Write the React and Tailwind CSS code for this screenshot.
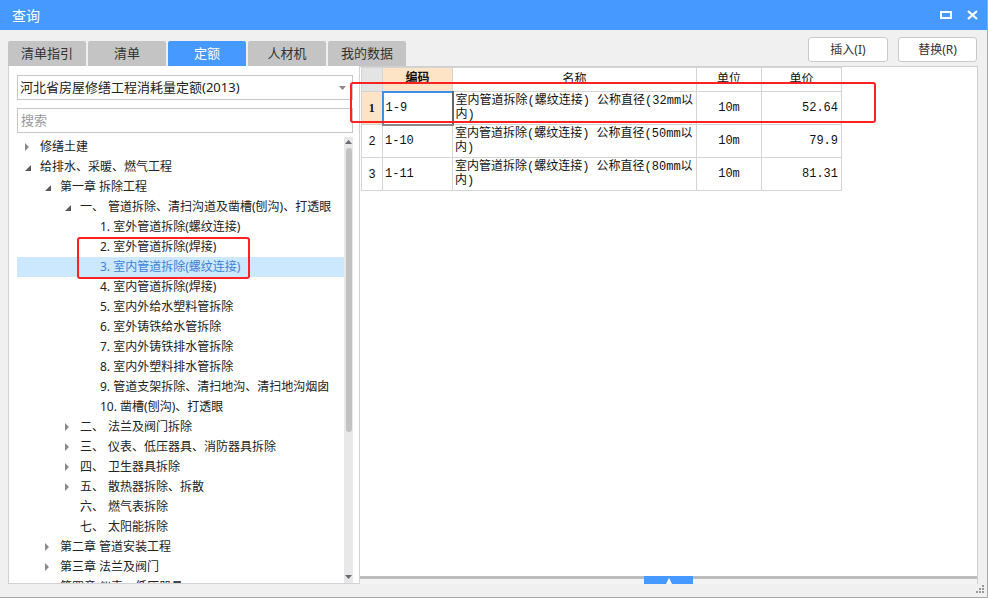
import React from "react";

const TREE = [
  { lv: 0, arrow: "closed", text: "修缮土建" },
  { lv: 0, arrow: "open", text: "给排水、采暖、燃气工程" },
  { lv: 1, arrow: "open", text: "第一章 拆除工程" },
  { lv: 2, arrow: "open", num: "一、", text: "管道拆除、清扫沟道及凿槽(刨沟)、打透眼" },
  { lv: 3, text: "1. 室外管道拆除(螺纹连接)" },
  { lv: 3, text: "2. 室外管道拆除(焊接)" },
  { lv: 3, text: "3. 室内管道拆除(螺纹连接)", selected: true },
  { lv: 3, text: "4. 室内管道拆除(焊接)" },
  { lv: 3, text: "5. 室内外给水塑料管拆除" },
  { lv: 3, text: "6. 室外铸铁给水管拆除" },
  { lv: 3, text: "7. 室内外铸铁排水管拆除" },
  { lv: 3, text: "8. 室内外塑料排水管拆除" },
  { lv: 3, text: "9. 管道支架拆除、清扫地沟、清扫地沟烟囱" },
  { lv: 3, text: "10. 凿槽(刨沟)、打透眼" },
  { lv: 2, arrow: "closed", num: "二、", text: "法兰及阀门拆除" },
  { lv: 2, arrow: "closed", num: "三、", text: "仪表、低压器具、消防器具拆除" },
  { lv: 2, arrow: "closed", num: "四、", text: "卫生器具拆除" },
  { lv: 2, arrow: "closed", num: "五、", text: "散热器拆除、拆散" },
  { lv: 2, num: "六、", text: "燃气表拆除" },
  { lv: 2, num: "七、", text: "太阳能拆除" },
  { lv: 1, arrow: "closed", text: "第二章 管道安装工程" },
  { lv: 1, arrow: "closed", text: "第三章 法兰及阀门" },
  { lv: 1, arrow: "closed", text: "第四章 仪表、低压器具" },
];

const INDENT = ["pl-[8px]", "pl-[28px]", "pl-[48px]", "pl-[68px]"];

const TABS = ["清单指引", "清单", "定额", "人材机", "我的数据"];

const ROWS = [
  { n: "1", code: "1-9", size: "32", unit: "10m", price: "52.64", active: true },
  { n: "2", code: "1-10", size: "50", unit: "10m", price: "79.9" },
  { n: "3", code: "1-11", size: "80", unit: "10m", price: "81.31" },
];

function Arrow({ kind }) {
  if (kind === "open") {
    return (
      <svg width="7" height="7" viewBox="0 0 7 7" className="mt-[3px]">
        <polygon points="6,0 6,6 0,6" fill="#5a5a5a" />
      </svg>
    );
  }
  if (kind === "closed") {
    return (
      <svg width="5" height="8" viewBox="0 0 5 8">
        <polygon points="0,0 4,4 0,8" fill="#8a8a8a" />
      </svg>
    );
  }
  return null;
}

function TreeRow({ item }) {
  return (
    <div
      className={`h-[20px] flex items-center whitespace-nowrap ${INDENT[item.lv]} ${
        item.selected ? "bg-[#cce8ff] text-[#3c82d8]" : "text-[#222]"
      }`}
    >
      <span className="w-[15px] shrink-0 flex items-center">
        <Arrow kind={item.arrow} />
      </span>
      {item.num && <span className="w-[28px] shrink-0">{item.num}</span>}
      <span>{item.text}</span>
    </div>
  );
}

export default function App() {
  return (
    <div className="w-[988px] h-[598px] bg-[#f0f0f0] flex flex-col overflow-hidden border-r border-[#a8a8a8] font-['Noto_Sans','Noto_Sans_CJK_SC',sans-serif] text-[12px]">
      {/* title bar */}
      <div className="h-[30px] shrink-0 bg-[#4699ff] flex items-center justify-between pl-[12px] pr-[9px]">
        <span className="text-white text-[14px]">查询</span>
        <div className="flex items-center gap-[15px]">
          <svg width="12" height="8" viewBox="0 0 12 8">
            <rect x="1" y="1" width="10" height="6" fill="none" stroke="#fff" strokeWidth="2" />
          </svg>
          <svg width="11" height="10" viewBox="0 0 11 10">
            <path d="M1 1 L10 9 M10 1 L1 9" stroke="#fff" strokeWidth="2.2" />
          </svg>
        </div>
      </div>

      {/* tabs + buttons */}
      <div className="h-[36px] shrink-0 flex justify-between pl-[8px] pr-[10px]">
        <div className="flex items-end gap-[2px]">
          {TABS.map((t) => (
            <div
              key={t}
              className={`w-[78px] h-[25px] rounded-t-[2px] flex items-center justify-center text-[13px] ${
                t === "定额" ? "bg-[#4699ff] text-white" : "bg-[#c4c4c4] text-[#333]"
              }`}
            >
              {t}
            </div>
          ))}
        </div>
        <div className="flex gap-[10px] pt-[7px]">
          <button className="w-[80px] h-[25px] bg-white border border-[#c9c9c9] rounded-[3px] text-[#333] text-[12px]">
            插入(I)
          </button>
          <button className="w-[79px] h-[25px] bg-white border border-[#c9c9c9] rounded-[3px] text-[#333] text-[12px]">
            替换(R)
          </button>
        </div>
      </div>

      {/* main */}
      <div className="relative h-[518px] shrink-0 flex pl-[8px]">
        {/* left panel */}
        <div className="w-[352px] h-full bg-white border-l border-r border-b border-[#d2d2d2] flex flex-col pt-[9px] pl-[8px] pr-[6px]">
          <div className="h-[25px] shrink-0 border border-[#c8c8c8] flex items-center justify-between pl-[2px] pr-[6px] text-[13px] text-[#222]">
            <span>河北省房屋修缮工程消耗量定额(2013)</span>
            <svg width="7" height="4" viewBox="0 0 7 4">
              <polygon points="0,0 7,0 3.5,4" fill="#888" />
            </svg>
          </div>
          <div className="mt-[8px] h-[25px] shrink-0 border border-[#c8c8c8] flex items-center pl-[3px] text-[13px] text-[#9a9a9a]">
            搜索
          </div>
          <div className="mt-[4px] flex-1 min-h-0 flex">
            <div className="flex-1 min-w-0 overflow-hidden">
              {TREE.map((item, i) => (
                <TreeRow key={i} item={item} />
              ))}
            </div>
            <div className="w-[9px] shrink-0 bg-[#e8e8e8] flex flex-col items-center">
              <svg width="7" height="5" viewBox="0 0 7 5" className="mt-[3px]">
                <polygon points="3.5,0 7,4 0,4" fill="#6a6a74" />
              </svg>
              <div className="mt-[3px] w-[6px] h-[284px] rounded-[3px] bg-[#c2c2c2]" />
              <div className="flex-1" />
              <svg width="7" height="5" viewBox="0 0 7 5" className="mb-[3px]">
                <polygon points="0,0 7,0 3.5,4" fill="#6a6a74" />
              </svg>
            </div>
          </div>
        </div>

        {/* right panel */}
        <div className="relative w-[618px] h-full flex flex-col border-t border-r border-[#cfcfcf]">
          <div className="flex-1 bg-white pl-[1px]">
            <table className="border-collapse table-fixed font-['Liberation_Mono','Noto_Sans_CJK_SC',monospace] text-[12px] text-[#111]">
              <colgroup>
                <col className="w-[21px]" />
                <col className="w-[70px]" />
                <col className="w-[244px]" />
                <col className="w-[65px]" />
                <col className="w-[80px]" />
              </colgroup>
              <thead>
                <tr className="h-[24px]">
                  <th className="border border-[#d4d4d4] bg-[#e4e4e4]" />
                  <th className="border border-[#d4d4d4] bg-[#fde4c6] font-bold">编码</th>
                  <th className="border border-[#d4d4d4] font-normal">名称</th>
                  <th className="border border-[#d4d4d4] font-normal">单位</th>
                  <th className="border border-[#d4d4d4] font-normal">单价</th>
                </tr>
              </thead>
              <tbody>
                {ROWS.map((r) => (
                  <tr key={r.n} className="h-[33px]">
                    <td
                      className={`border border-[#d4d4d4] text-center ${
                        r.active ? "bg-[#fde4c6] font-bold font-['Liberation_Serif',serif]" : "font-['Liberation_Sans',sans-serif]"
                      }`}
                    >
                      {r.n}
                    </td>
                    <td
                      className={`border border-[#d4d4d4] pl-[2px] ${
                        r.active ? "border-l-2 border-t-2 border-l-[#3d8fe8] border-t-[#3d8fe8] border-r-2 border-b-2 border-r-[#666] border-b-[#888]" : ""
                      }`}
                    >
                      {r.code}
                    </td>
                    <td className="border border-[#d4d4d4] pl-[2px] leading-[14px]">
                      室内管道拆除(螺纹连接) 公称直径({r.size}mm以
                      <br />
                      内)
                    </td>
                    <td className="border border-[#d4d4d4] text-center">{r.unit}</td>
                    <td className="border border-[#d4d4d4] text-right pr-[3px]">{r.price}</td>
                  </tr>
                ))}
              </tbody>
            </table>
          </div>
          <div className="h-[3px] bg-[#bdbdbd]" />
          <div className="h-[5px] bg-[#f4f4f4]" />
          <div className="absolute left-[284px] bottom-0 w-[49px] h-[8px] bg-[#4699ff] flex items-end justify-center">
            <svg width="6" height="6" viewBox="0 0 6 6">
              <polygon points="3,0 6,6 0,6" fill="#fff" />
            </svg>
          </div>
        </div>

        {/* highlight boxes */}
        <div className="absolute left-[77px] top-[171px] w-[173px] h-[42px] border-[2.5px] border-[#ff2222] rounded-[3px]" />
        <div className="absolute left-[350px] top-[16px] w-[526px] h-[41px] border-[2.5px] border-[#ff2222] rounded-[3px]" />
      </div>

      {/* bottom strip */}
      <div className="relative h-[14px] shrink-0 border-b border-[#a8a8a8]">
        <svg width="8" height="8" viewBox="0 0 8 8" className="absolute right-[3px] top-[1px]">
          <rect x="6" y="0" width="2" height="2" fill="#999" />
          <rect x="3" y="3" width="2" height="2" fill="#999" />
          <rect x="6" y="3" width="2" height="2" fill="#999" />
          <rect x="0" y="6" width="2" height="2" fill="#999" />
          <rect x="3" y="6" width="2" height="2" fill="#999" />
          <rect x="6" y="6" width="2" height="2" fill="#999" />
        </svg>
      </div>
    </div>
  );
}
